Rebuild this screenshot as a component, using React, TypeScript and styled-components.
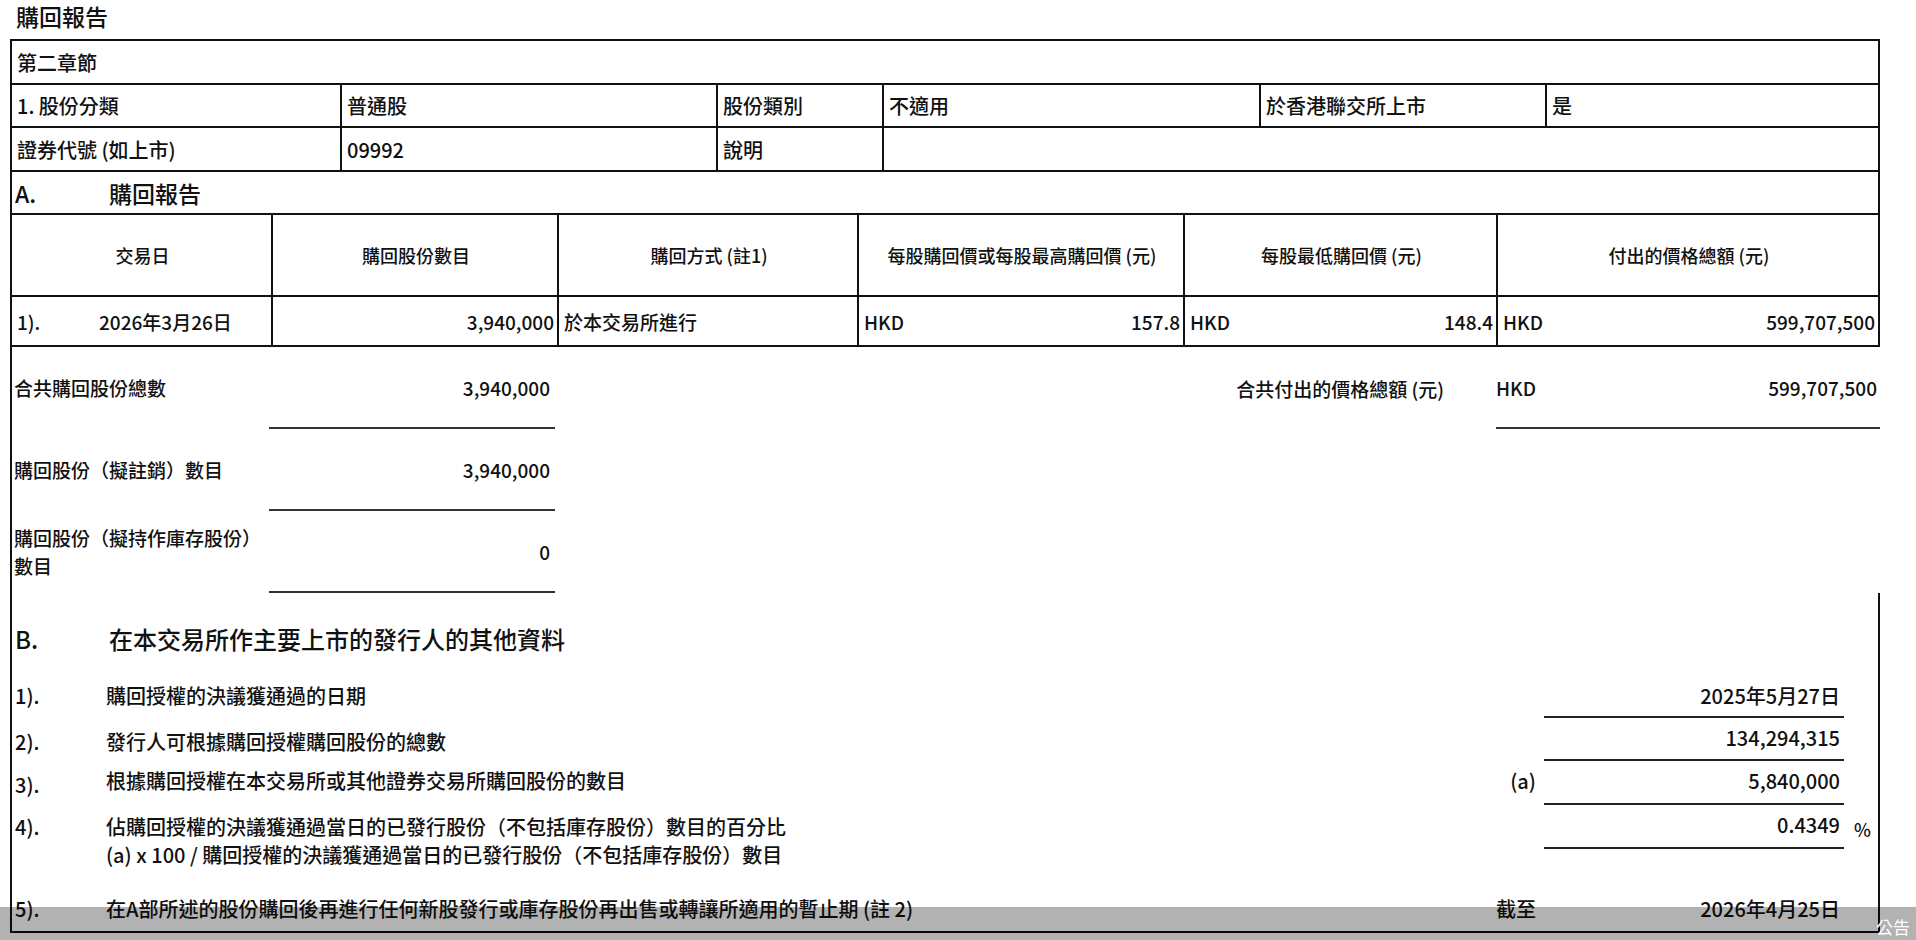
import styled, { createGlobalStyle } from "styled-components";

const Global = createGlobalStyle`
  html, body { margin: 0; padding: 0; background: #fff; overflow: hidden; }
  body {
    font-family: "Noto Sans CJK TC", "Noto Sans", sans-serif;
    font-weight: 500;
    color: #111;
  }
`;

const Page = styled.div`
  width: 1916px;
  height: 940px;
  position: relative;
`;

const Title = styled.div`
  height: 39px;
  padding-left: 16px;
  font-size: 23px;
  line-height: 32px;
`;

const Frame = styled.div`
  margin-left: 10px;
  width: 1870px;
  box-sizing: border-box;
  border-left: 2px solid #111;
  border-right: 2px solid #111;
  border-top: 2px solid #111;
`;

const Row = styled.div<{ $cols: string; $h: number }>`
  display: grid;
  grid-template-columns: ${(p) => p.$cols};
  height: ${(p) => p.$h}px;
  border-bottom: 2px solid #111;
  box-sizing: border-box;
`;

const Cell = styled.div<{ $center?: boolean; $size?: number; $right?: boolean }>`
  display: flex;
  align-items: center;
  justify-content: ${(p) => (p.$center ? "center" : p.$right ? "flex-end" : "flex-start")};
  padding: 0 3px 0 5px;
  font-size: ${(p) => p.$size ?? 20}px;
  border-left: 2px solid #111;
  white-space: nowrap;
  overflow: hidden;
  &:first-child { border-left: none; }
`;

const Split = styled.span`
  flex: 1;
  display: flex;
  justify-content: space-between;
`;

const Num = styled.span`
  width: 82px;
`;

const Summary = styled.div`
  width: 1870px;
  margin-left: 10px;
  box-sizing: border-box;
  border-left: 2px solid #111;
  display: grid;
  grid-template-columns: 257px 286px 1fr 384px;
  grid-auto-rows: 82px;
  font-size: 19px;
`;

const SumLabel = styled.div`
  display: flex;
  align-items: center;
  padding-left: 2px;
  line-height: 28px;
`;

const SumValue = styled.div<{ $line?: boolean }>`
  display: flex;
  align-items: center;
  justify-content: flex-end;
  padding-right: 5px;
  border-bottom: ${(p) => (p.$line ? "2px solid #333" : "none")};
`;

const SumRight = styled.div`
  display: flex;
  align-items: center;
  justify-content: flex-end;
  padding-right: 52px;
`;

const Section = styled.div`
  width: 1870px;
  margin-left: 10px;
  box-sizing: border-box;
  border-left: 2px solid #111;
  border-right: 2px solid #111;
  border-bottom: 2px solid #111;
`;

const Heading = styled.div`
  height: 79px;
  display: flex;
  align-items: center;
  padding-top: 12px;
  box-sizing: border-box;
  font-size: 24px;
`;

const Mark = styled.span`
  width: 94px;
  padding-left: 3px;
`;

const Item = styled.div<{ $h: number }>`
  display: grid;
  grid-template-columns: 94px 1fr 70px 300px 34px;
  height: ${(p) => p.$h}px;
  font-size: 20px;
`;

const ItemText = styled.div`
  padding-top: 10px;
  line-height: 28px;
`;

const ItemNum = styled.div`
  padding: 10px 0 0 3px;
  line-height: 28px;
`;

const ItemSide = styled.div`
  padding-top: 10px;
  line-height: 28px;
  text-align: right;
  padding-right: 8px;
`;

const ItemValue = styled.div<{ $line?: boolean; $h?: number }>`
  height: ${(p) => (p.$h ? `${p.$h}px` : "100%")};
  box-sizing: border-box;
  border-bottom: ${(p) => (p.$line ? "2px solid #222" : "none")};
  text-align: right;
  padding: 10px 4px 0 0;
  line-height: 28px;
`;

const Pct = styled.div`
  padding: 10px 0 0 10px;
  font-size: 18px;
  line-height: 28px;
`;

const Footer = styled.div`
  position: absolute;
  left: 0;
  right: 0;
  bottom: 0;
  height: 33px;
  background: rgba(0, 0, 0, 0.3);
  display: flex;
  justify-content: flex-end;
  align-items: center;
  padding: 6px 6px 0 0;
  color: #fff;
  font-size: 17px;
  font-weight: 400;
  box-sizing: border-box;
`;

const topCols = "328px 376px 166px 377px 286px 1fr";
const tableCols = "259px 286px 300px 326px 313px 1fr";

export default function App() {
  return (
    <Page>
      <Global />
      <Title>購回報告</Title>
      <Frame>
        <Row $cols="1fr" $h={44}><Cell>第二章節</Cell></Row>
        <Row $cols={topCols} $h={43}>
          <Cell>1. 股份分類</Cell>
          <Cell>普通股</Cell>
          <Cell>股份類別</Cell>
          <Cell>不適用</Cell>
          <Cell>於香港聯交所上市</Cell>
          <Cell>是</Cell>
        </Row>
        <Row $cols="328px 376px 166px 1fr" $h={44}>
          <Cell>證券代號 (如上市)</Cell>
          <Cell>09992</Cell>
          <Cell>說明</Cell>
          <Cell />
        </Row>
        <Row $cols="1fr" $h={43}>
          <Cell $size={23} style={{ paddingLeft: 0 }}><Mark>A.</Mark>購回報告</Cell>
        </Row>
        <Row $cols={tableCols} $h={82}>
          <Cell $center $size={18}>交易日</Cell>
          <Cell $center $size={18}>購回股份數目</Cell>
          <Cell $center $size={18}>購回方式 (註1)</Cell>
          <Cell $center $size={18}>每股購回價或每股最高購回價 (元)</Cell>
          <Cell $center $size={18}>每股最低購回價 (元)</Cell>
          <Cell $center $size={18}>付出的價格總額 (元)</Cell>
        </Row>
        <Row $cols={tableCols} $h={50}>
          <Cell $size={19}><Num>1).</Num>2026年3月26日</Cell>
          <Cell $right $size={19}>3,940,000</Cell>
          <Cell $size={19}>於本交易所進行</Cell>
          <Cell $size={19}><Split><span>HKD</span><span>157.8</span></Split></Cell>
          <Cell $size={19}><Split><span>HKD</span><span>148.4</span></Split></Cell>
          <Cell $size={19}><Split><span>HKD</span><span>599,707,500</span></Split></Cell>
        </Row>
      </Frame>
      <Summary>
        <SumLabel>合共購回股份總數</SumLabel>
        <SumValue $line>3,940,000</SumValue>
        <SumRight>合共付出的價格總額 (元)</SumRight>
        <SumValue $line style={{ justifyContent: "space-between", paddingRight: 3 }}>
          <span>HKD</span><span>599,707,500</span>
        </SumValue>
        <SumLabel>購回股份（擬註銷）數目</SumLabel>
        <SumValue $line>3,940,000</SumValue>
        <div />
        <div />
        <SumLabel>購回股份（擬持作庫存股份）<br />數目</SumLabel>
        <SumValue $line>0</SumValue>
        <div />
        <div />
      </Summary>
      <Section>
        <Heading><Mark>B.</Mark>在本交易所作主要上市的發行人的其他資料</Heading>
        <Item $h={46}>
          <ItemNum>1).</ItemNum>
          <ItemText>購回授權的決議獲通過的日期</ItemText>
          <ItemSide />
          <ItemValue $line>2025年5月27日</ItemValue>
          <div />
        </Item>
        <Item $h={43}>
          <ItemNum>2).</ItemNum>
          <ItemText>發行人可根據購回授權購回股份的總數</ItemText>
          <ItemSide />
          <ItemValue $line style={{ paddingTop: 6 }}>134,294,315</ItemValue>
          <div />
        </Item>
        <Item $h={44}>
          <ItemNum>3).</ItemNum>
          <ItemText style={{ paddingTop: 6 }}>根據購回授權在本交易所或其他證券交易所購回股份的數目</ItemText>
          <ItemSide style={{ paddingTop: 6 }}>(a)</ItemSide>
          <ItemValue $line style={{ paddingTop: 6 }}>5,840,000</ItemValue>
          <div />
        </Item>
        <Item $h={82}>
          <ItemNum style={{ paddingTop: 8 }}>4).</ItemNum>
          <ItemText style={{ paddingTop: 8 }}>
            佔購回授權的決議獲通過當日的已發行股份（不包括庫存股份）數目的百分比
            <br />
            (a) x 100 / 購回授權的決議獲通過當日的已發行股份（不包括庫存股份）數目
          </ItemText>
          <ItemSide />
          <ItemValue $line $h={44} style={{ paddingTop: 6 }}>0.4349</ItemValue>
          <Pct>%</Pct>
        </Item>
        <Item $h={44}>
          <ItemNum style={{ paddingTop: 8 }}>5).</ItemNum>
          <ItemText style={{ paddingTop: 8 }}>在A部所述的股份購回後再進行任何新股發行或庫存股份再出售或轉讓所適用的暫止期 (註 2)</ItemText>
          <ItemSide style={{ paddingTop: 8 }}>截至</ItemSide>
          <ItemValue style={{ paddingTop: 8 }}>2026年4月25日</ItemValue>
          <div />
        </Item>
      </Section>
      <Footer>公告</Footer>
    </Page>
  );
}
